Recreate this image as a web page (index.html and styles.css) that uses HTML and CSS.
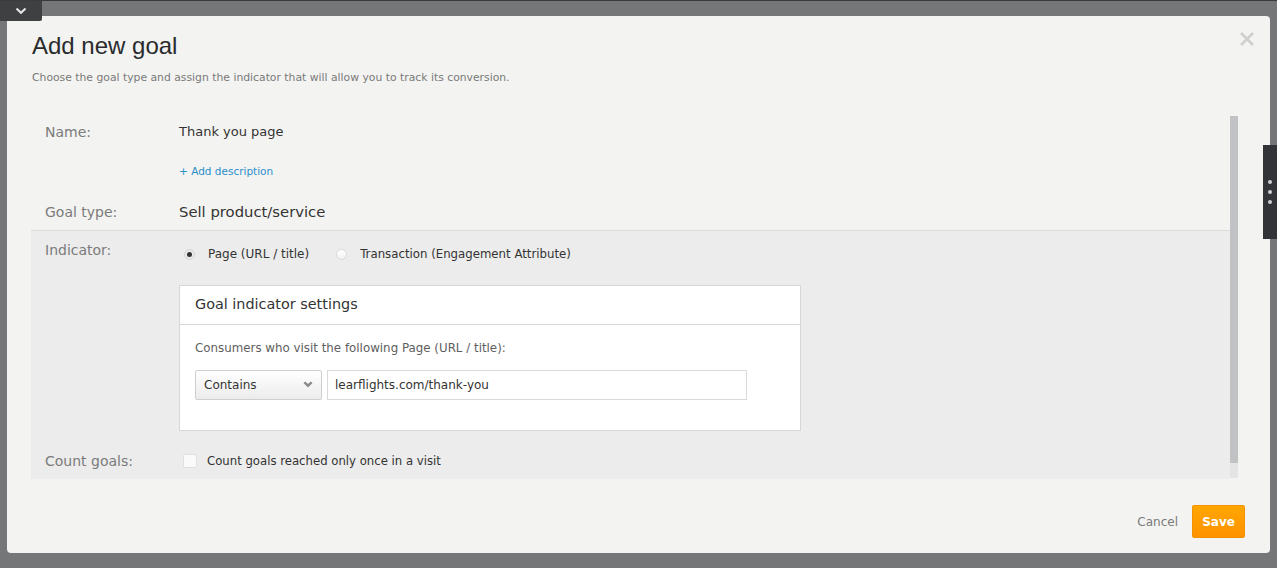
FILE: index.html
```html
<!DOCTYPE html>
<html>
<head>
<meta charset="utf-8">
<link rel="stylesheet" href="styles.css">
</head>
<body>
<div class="top-tab">
  <svg width="12" height="8" viewBox="0 0 12 8"><path d="M1.5 1.5 L6 5.8 L10.5 1.5" fill="none" stroke="#e6e6e6" stroke-width="2"/></svg>
</div>
<div class="side-tab"><span></span><span></span><span></span></div>

<div class="modal">
  <div class="close">
    <svg width="16" height="16" viewBox="0 0 16 16"><path d="M2 2 L14 14 M14 2 L2 14" stroke="#cfcfcf" stroke-width="2.6" stroke-linecap="butt"/></svg>
  </div>
  <h1 class="title">Add new goal</h1>
  <p class="subtitle">Choose the goal type and assign the indicator that will allow you to track its conversion.</p>

  <div class="form-area">
    <div class="form-content">
      <div class="row row-name">
        <div class="label">Name:</div>
        <div class="value value-sm">Thank you page</div>
      </div>
      <div class="row row-desc">
        <div class="label"></div>
        <div class="value"><a class="link">+ Add description</a></div>
      </div>
      <div class="row row-type">
        <div class="label">Goal type:</div>
        <div class="value value-lg">Sell product/service</div>
      </div>

      <div class="indicator-section">
        <div class="row row-indicator">
          <div class="label">Indicator:</div>
          <div class="value radios">
            <span class="radio checked"></span><span class="radio-text">Page (URL / title)</span>
            <span class="radio second"></span><span class="radio-text narrow">Transaction (Engagement Attribute)</span>
          </div>
        </div>
        <div class="row row-box">
          <div class="label"></div>
          <div class="settings-box">
            <div class="box-head">Goal indicator settings</div>
            <div class="box-body">
              <div class="box-note">Consumers who visit the following Page (URL / title):</div>
              <div class="controls">
                <div class="select">
                  <span>Contains</span>
                  <svg width="10" height="8" viewBox="0 0 10 8"><path d="M0.5 2 L2.3 0.4 L5 3 L7.7 0.4 L9.5 2 L5 6.6 Z" fill="#8a8a8a"/></svg>
                </div>
                <div class="input">learflights.com/thank-you</div>
              </div>
            </div>
          </div>
        </div>
        <div class="row row-count">
          <div class="label">Count goals:</div>
          <div class="value check-wrap">
            <span class="checkbox"></span><span class="check-text">Count goals reached only once in a visit</span>
          </div>
        </div>
      </div>
    </div>
    <div class="scrollbar"><div class="thumb"></div></div>
  </div>

  <div class="footer">
    <span class="cancel">Cancel</span>
    <button class="save">Save</button>
  </div>
</div>
</body>
</html>
```

FILE: styles.css
```css
html, body {
  margin: 0;
  padding: 0;
}
body {
  background: #757677;
  height: 568px;
  overflow: hidden;
  box-sizing: border-box;
  border-top: 1px solid #3a3b3c;
  padding: 15px 7px 15px 7px;
  font-family: "DejaVu Sans", Verdana, sans-serif;
  position: relative;
}
.top-tab {
  position: absolute;
  left: 0;
  top: 0;
  width: 42px;
  height: 20px;
  background: #3f4042;
  border-bottom-right-radius: 2px;
  display: flex;
  justify-content: center;
  padding-top: 6px;
  box-sizing: border-box;
  z-index: 2;
}
.side-tab {
  position: absolute;
  right: 0;
  top: 144px;
  width: 14px;
  height: 94px;
  background: #323437;
  display: flex;
  flex-direction: column;
  align-items: center;
  justify-content: center;
  gap: 6px;
  z-index: 2;
}
.side-tab span {
  width: 4px;
  height: 4px;
  border-radius: 50%;
  background: #d0d0d0;
}
.modal {
  position: relative;
  height: 537px;
  background: #f3f3f1;
  border-radius: 4px;
  box-sizing: border-box;
  padding-top: 16px;
  display: flex;
  flex-direction: column;
}
.close {
  position: absolute;
  right: 15px;
  top: 15px;
  width: 16px;
  height: 16px;
}
.close svg { display: block; }
.title {
  margin: 0 0 0 25px;
  font-family: "Liberation Sans", Arial, sans-serif;
  font-size: 24px;
  line-height: 28px;
  font-weight: normal;
  color: #2a2b2d;
}
.subtitle {
  margin: 11px 0 0 25px;
  font-size: 10.8px;
  line-height: 14px;
  color: #7a7a7a;
}
.form-area {
  margin: 31px 32px 0 24px;
  height: 362px;
  display: flex;
}
.form-content {
  flex: 1;
}
.scrollbar {
  width: 8px;
  background: #e4e4e4;
}
.scrollbar .thumb {
  height: 347px;
  background: #c1c2c3;
}
.row {
  display: flex;
}
.label {
  width: 134px;
  padding-left: 14px;
  flex: none;
  font-size: 14px;
  line-height: 20px;
  color: #7b7b7b;
}
.value {
  font-size: 14px;
  line-height: 20px;
  color: #333;
}
.value-sm { font-size: 13px; }
.value-lg { font-size: 14.8px; }
.row-name { padding-top: 6px; }
.row-desc { margin-top: 20px; }
.row-desc .value { line-height: 16px; }
.link {
  font-size: 10.5px;
  color: #2b8fc9;
}
.row-type { margin-top: 23px; }
.indicator-section {
  margin-top: 8px;
  border-top: 1px solid #dcdcdc;
  background: #ececec;
  padding: 9px 0 8px 0;
}
.radios {
  display: flex;
  align-items: center;
  font-size: 12px;
  color: #333;
  padding-top: 4px;
}
.radio-text.narrow { font-size: 11.75px; }
.radio {
  width: 9px;
  height: 9px;
  border-radius: 50%;
  border: 1px solid #d9d9d9;
  background: linear-gradient(#ffffff, #f1f1f1);
  margin-left: 5px;
  margin-right: 13px;
  position: relative;
  flex: none;
}
.radio.checked {
  background: #e9e9e9;
  border-color: #d4d4d4;
}
.radio.checked::after {
  content: "";
  position: absolute;
  left: 2px;
  top: 2px;
  width: 5px;
  height: 5px;
  border-radius: 50%;
  background: #333;
}
.radio.second { margin-left: 27px; margin-right: 13px; }
.row-box { margin-top: 21px; }
.settings-box {
  width: 620px;
  background: #fff;
  border: 1px solid #d7d7d7;
}
.box-head {
  height: 38px;
  line-height: 36px;
  padding-left: 15px;
  font-size: 14.4px;
  color: #333;
  border-bottom: 1px solid #d7d7d7;
}
.box-body {
  padding: 15px 15px 30px 15px;
}
.box-note {
  font-size: 11.85px;
  line-height: 16px;
  color: #606060;
}
.controls {
  margin-top: 14px;
  display: flex;
  gap: 5px;
}
.select {
  box-sizing: border-box;
  height: 30px;
  width: 127px;
  border: 1px solid #cfcfcf;
  border-radius: 2px;
  background: linear-gradient(#ffffff, #ececec);
  display: flex;
  align-items: center;
  justify-content: space-between;
  padding: 0 8px 0 8px;
  font-size: 12px;
  color: #333;
}
.select svg { display: block; }
.input {
  width: 420px;
  height: 30px;
  box-sizing: border-box;
  border: 1px solid #dadada;
  background: #fff;
  padding-left: 7px;
  font-size: 12px;
  line-height: 28px;
  color: #333;
}
.row-count { margin-top: 20px; }
.check-wrap {
  display: flex;
  align-items: center;
  font-size: 11.7px;
}
.checkbox {
  width: 12px;
  height: 12px;
  border: 1px solid #e0e0e0;
  border-radius: 2px;
  background: #fafafa;
  margin-left: 4px;
  margin-right: 10px;
  flex: none;
}
.footer {
  margin-top: auto;
  margin-bottom: 15px;
  margin-right: 25px;
  display: flex;
  justify-content: flex-end;
  align-items: center;
  gap: 14px;
}
.cancel {
  font-size: 12px;
  color: #7a7a7a;
}
.save {
  width: 53px;
  height: 33px;
  border: 1px solid #f29200;
  border-radius: 2px;
  background: linear-gradient(#ffa600, #ff9200);
  color: #fff;
  font-family: "DejaVu Sans", Verdana, sans-serif;
  font-size: 12px;
  font-weight: bold;
  padding: 0;
}
```
